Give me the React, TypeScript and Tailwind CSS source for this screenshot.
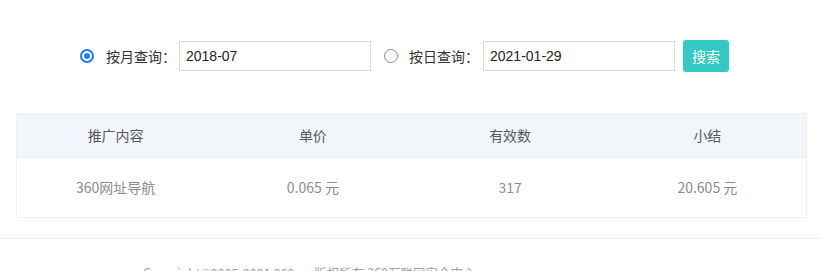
import React from "react";

function Radio({ checked }: { checked: boolean }) {
  return checked ? (
    <span className="flex h-[14px] w-[14px] shrink-0 items-center justify-center rounded-full border-2 border-[#1a7ef5] bg-white">
      <span className="block h-[6px] w-[6px] rounded-full bg-[#1a7ef5]" />
    </span>
  ) : (
    <span className="block h-[14px] w-[14px] shrink-0 rounded-full border border-[#8a8a8a] bg-white" />
  );
}

export default function App() {
  const font = { fontFamily: '"Noto Sans CJK SC", "Liberation Sans", sans-serif' };
  return (
    <div className="h-[271px] w-[822px] overflow-hidden bg-white" style={font}>
      <div className="flex h-[73px] items-end pb-px pl-[80px]">
        <div className="flex h-[32px] items-center">
          <Radio checked />
          <span className="ml-[12px] w-[73px] text-[14px] text-[#333]">按月查询：</span>
          <div className="flex h-[30px] w-[192px] items-center border border-[#dcdcdc] pl-[6px] text-[14px] text-[#222]" style={{ fontFamily: '"Liberation Sans", sans-serif' }}>
            2018-07
          </div>
          <div className="ml-[13px]">
            <Radio checked={false} />
          </div>
          <span className="ml-[11px] w-[74px] text-[14px] text-[#333]">按日查询：</span>
          <div className="flex h-[30px] w-[192px] items-center border border-[#dcdcdc] pl-[6px] text-[14px] text-[#222]" style={{ fontFamily: '"Liberation Sans", sans-serif' }}>
            2021-01-29
          </div>
          <button className="ml-[8px] flex h-[32px] w-[46px] items-center justify-center rounded-[3px] bg-[#33c9c4] text-[14px] text-white">
            搜索
          </button>
        </div>
      </div>
      <div className="ml-[16px] mt-[40px] w-[791px] border border-[#edf0f4]">
        <div className="grid h-[43px] grid-cols-4 items-center bg-[#f2f5f9] text-center text-[14px] text-[#525a66]">
          <span>推广内容</span>
          <span>单价</span>
          <span>有效数</span>
          <span>小结</span>
        </div>
        <div className="grid h-[60px] grid-cols-4 items-center border-t border-[#edf0f4] text-center text-[14px] text-[#8c8c8c]">
          <span>360网址导航</span>
          <span>0.065 元</span>
          <span>317</span>
          <span>20.605 元</span>
        </div>
      </div>
      <div className="mt-[20px] border-t border-[#edf0f4] pl-[143px] pt-[25px] text-[12.5px] leading-[18px] text-[#a0a0a0]">
        Copyright©2005-2021 360.cn 版权所有 360互联网安全中心
      </div>
    </div>
  );
}
